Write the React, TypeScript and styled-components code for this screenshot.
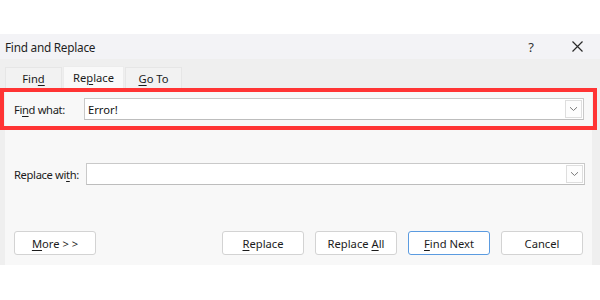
import React from "react";
import styled, { createGlobalStyle } from "styled-components";

const GlobalStyle = createGlobalStyle`
  html, body {
    margin: 0;
    padding: 0;
    background: #ffffff;
  }
  body {
    font-family: "Noto Sans", "Open Sans", sans-serif;
    color: #1b1b1b;
  }
`;

// whole dialog window
const Dialog = styled.div`
  margin-top: 34px;
  width: 600px;
  height: 231px;
  background: #efefef;
  display: flex;
  flex-direction: column;
`;

const TitleBar = styled.div`
  height: 26px;
  background: #f3f3f6;
  display: flex;
  align-items: center;
  padding-left: 5px;
  font-size: 11.8px;
  letter-spacing: -0.25px;
  color: #1f1f1f;
`;

const Title = styled.span`
  flex: 1;
`;

const TitleButton = styled.span<{ $width: number }>`
  width: ${(p) => p.$width}px;
  display: flex;
  justify-content: center;
  align-items: center;
  color: #333;
  font-size: 13px;
`;

const TabStrip = styled.div`
  height: 30px;
  display: flex;
  align-items: flex-end;
  padding-left: 5px;
  gap: 1px;
`;

const Tab = styled.div<{ $active?: boolean; $width: number }>`
  width: ${(p) => p.$width}px;
  height: ${(p) => (p.$active ? 22 : 21)}px;
  line-height: ${(p) => (p.$active ? 22 : 21)}px;
  background: ${(p) => (p.$active ? "#f9f9f9" : "#f2f2f2")};
  border: 1px solid ${(p) => (p.$active ? "#ececec" : "#e6e6e6")};
  border-bottom: none;
  box-sizing: border-box;
  text-align: center;
  font-size: 11.2px;
  color: #1b1b1b;
`;

const Key = styled.span`
  text-decoration: underline;
  text-underline-offset: 2px;
`;

const Panel = styled.div`
  margin: 0 8px 0 5px;
  background: #f8f8f8;
  height: 173px;
  display: flex;
  flex-direction: column;
  padding: 0 7px 10px 9px;
`;

// the red annotation frame round the "Find what" row
const HighlightRow = styled.div`
  margin: 0 -12px 0 -14px;
  height: 42px;
  box-sizing: border-box;
  border: 4px solid #ff3434;
  display: flex;
  align-items: center;
  padding: 0 9px 0 10px;
`;

const Row = styled.div<{ $top: number }>`
  margin-top: ${(p) => p.$top}px;
  display: flex;
  align-items: center;
  height: 22px;
`;

const Label = styled.label<{ $width: number }>`
  width: ${(p) => p.$width}px;
  flex-shrink: 0;
  font-size: 11.2px;
  letter-spacing: -0.35px;
  color: #1b1b1b;
  white-space: nowrap;
`;

const Combo = styled.div`
  flex: 1;
  height: 22px;
  box-sizing: border-box;
  background: #ffffff;
  border: 1px solid #c9c9c9;
  border-bottom-color: #bdbdbd;
  display: flex;
  align-items: center;
  padding: 1px;
`;

const ComboText = styled.span`
  flex: 1;
  font-size: 11.2px;
  padding-left: 2px;
  color: #111;
`;

const DropButton = styled.div`
  width: 17px;
  height: 18px;
  box-sizing: border-box;
  border: 1px solid #dedede;
  background: #fdfdfd;
  display: flex;
  align-items: center;
  justify-content: center;
`;

const ButtonRow = styled.div`
  margin-top: auto;
  display: flex;
  align-items: center;
  padding-right: 2px;
`;

const Button = styled.button<{ $primary?: boolean; $gap?: number }>`
  width: 82px;
  height: 24px;
  margin-left: ${(p) => p.$gap ?? 0}px;
  background: #ffffff;
  border: 1px solid ${(p) => (p.$primary ? "#5b9be0" : "#d3d3d3")};
  border-radius: 3px;
  font-family: inherit;
  font-size: 11.2px;
  color: #1b1b1b;
  padding: 0;
  text-align: center;
`;

const Spacer = styled.div`
  flex: 1;
`;

const Chevron = () => (
  <svg width="9" height="6" viewBox="0 0 9 6">
    <path d="M1 1.2 L4.5 4.5 L8 1.2" fill="none" stroke="#7a7a7a" strokeWidth="1" />
  </svg>
);

const CloseIcon = () => (
  <svg width="11" height="11" viewBox="0 0 11 11">
    <path d="M0.5 0.5 L10.5 10.5 M10.5 0.5 L0.5 10.5" stroke="#2a2a2a" strokeWidth="1.2" />
  </svg>
);

export default function App() {
  return (
    <>
      <GlobalStyle />
      <Dialog>
        <TitleBar>
          <Title>Find and Replace</Title>
          <TitleButton $width={46}>?</TitleButton>
          <TitleButton $width={46}>
            <CloseIcon />
          </TitleButton>
        </TitleBar>

        <TabStrip>
          <Tab $width={57}>
            Fin<Key>d</Key>
          </Tab>
          <Tab $width={61} $active>
            Re<Key>p</Key>lace
          </Tab>
          <Tab $width={57}>
            <Key>G</Key>o To
          </Tab>
        </TabStrip>

        <Panel>
          <HighlightRow>
            <Label $width={70}>
              Fi<Key>n</Key>d what:
            </Label>
            <Combo>
              <ComboText>Error!</ComboText>
              <DropButton>
                <Chevron />
              </DropButton>
            </Combo>
          </HighlightRow>

          <Row $top={33}>
            <Label $width={72}>
              Replace wi<Key>t</Key>h:
            </Label>
            <Combo>
              <ComboText />
              <DropButton>
                <Chevron />
              </DropButton>
            </Combo>
          </Row>

          <ButtonRow>
            <Button>
              <Key>M</Key>ore &gt; &gt;
            </Button>
            <Spacer />
            <Button>
              <Key>R</Key>eplace
            </Button>
            <Button $gap={11}>
              Replace <Key>A</Key>ll
            </Button>
            <Button $gap={11} $primary>
              <Key>F</Key>ind Next
            </Button>
            <Button $gap={11}>Cancel</Button>
          </ButtonRow>
        </Panel>
      </Dialog>
    </>
  );
}
